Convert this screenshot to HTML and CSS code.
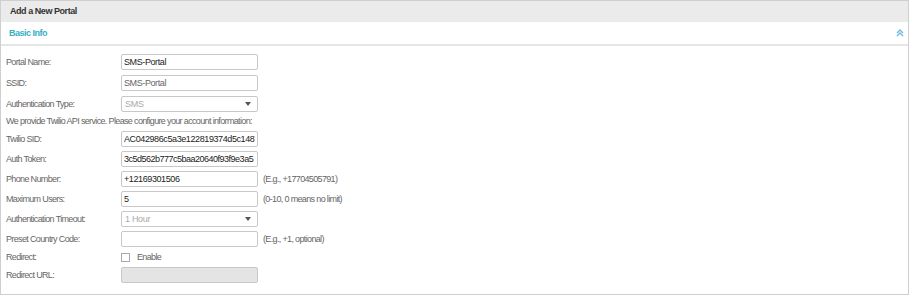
FILE: index.html
```html
<!DOCTYPE html>
<html lang="en">
<head>
    <meta charset="UTF-8">
    <title>Add a New Portal</title>
    <link rel="stylesheet" href="styles.css">
</head>
<body>
    <div class="panel">
        <div class="panel-title">Add a New Portal</div>

        <div class="section-head">
            <span>Basic Info</span>
            <svg class="collapse-icon" width="8" height="8" viewBox="0 0 8 8">
                <path d="M1 4 L4 1 L7 4 M1 7 L4 4 L7 7" fill="none" stroke="#6cb8e6" stroke-width="1.4"/>
            </svg>
        </div>

        <div class="form">
            <div class="row tall">
                <label>Portal Name:</label>
                <input type="text" value="SMS-Portal">
            </div>
            <div class="row tall">
                <label>SSID:</label>
                <input type="text" class="muted" value="SMS-Portal">
            </div>
            <div class="row tall">
                <label>Authentication Type:</label>
                <div class="select disabled">SMS<span class="caret"></span></div>
            </div>

            <div class="notice">We provide Twilio API service. Please configure your account information:</div>

            <div class="row">
                <label>Twilio SID:</label>
                <input type="text" value="AC042986c5a3e122819374d5c1487">
            </div>
            <div class="row">
                <label>Auth Token:</label>
                <input type="text" class="token" value="3c5d562b777c5baa20640f93f9e3a5">
            </div>
            <div class="row">
                <label>Phone Number:</label>
                <input type="text" value="+12169301506">
                <span class="hint">(E.g., +17704505791)</span>
            </div>
            <div class="row">
                <label>Maximum Users:</label>
                <input type="text" value="5">
                <span class="hint">(0-10, 0 means no limit)</span>
            </div>
            <div class="row">
                <label>Authentication Timeout:</label>
                <div class="select disabled">1 Hour<span class="caret"></span></div>
            </div>
            <div class="row">
                <label>Preset Country Code:</label>
                <input type="text" value="">
                <span class="hint">(E.g., +1, optional)</span>
            </div>
            <div class="row short">
                <label>Redirect:</label>
                <span class="check"></span>
                <span class="check-label">Enable</span>
            </div>
            <div class="row">
                <label>Redirect URL:</label>
                <input type="text" class="off" value="" disabled>
            </div>
        </div>
    </div>
</body>
</html>
```

FILE: styles.css
```css
body {
    margin: 0;
    font-family: "Liberation Sans", Arial, sans-serif;
    font-size: 9px;
    letter-spacing: -0.65px;
    color: #555;
    background-color: #fff;
}
.panel {
    width: 907px;
    height: 293px;
    border: 1px solid #cfcfcf;
    background-color: #fff;
}
.panel-title {
    height: 21px;
    line-height: 20px;
    padding-left: 9px;
    background-color: #ebebeb;
    font-weight: bold;
    letter-spacing: -0.45px;
    color: #333;
}
.section-head {
    display: flex;
    justify-content: space-between;
    align-items: center;
    height: 22px;
    padding: 0 4px 0 8px;
    border-bottom: 2px solid #e6e6e6;
    color: #35b0c4;
    font-weight: bold;
    letter-spacing: -0.5px;
}
.collapse-icon {
    display: block;
}
.form {
    padding: 5px 0 0 5px;
}
.row {
    display: flex;
    align-items: center;
    height: 20px;
}
.row.tall {
    height: 21px;
}
.row.short {
    height: 16px;
}
label {
    width: 115px;
    color: #666;
}
input {
    box-sizing: border-box;
    width: 137px;
    height: 16px;
    margin: 0;
    padding: 0 2px;
    border: 1px solid #c8c8c8;
    border-radius: 2px;
    font-family: "Liberation Sans", Arial, sans-serif;
    font-size: 9px;
    letter-spacing: -0.4px;
    color: #222;
    background-color: #fff;
    outline: none;
}
input.muted {
    color: #666;
}
input.token {
    letter-spacing: -0.5px;
}
input.off {
    background-color: #e4e4e4;
}
.select {
    box-sizing: border-box;
    display: flex;
    align-items: center;
    justify-content: space-between;
    width: 137px;
    height: 16px;
    padding: 0 6px 0 3px;
    border: 1px solid #c8c8c8;
    border-radius: 2px;
    letter-spacing: -0.3px;
    background-color: #fff;
}
.select.disabled {
    color: #aaa;
}
.caret {
    width: 0;
    height: 0;
    border-left: 3px solid transparent;
    border-right: 3px solid transparent;
    border-top: 4px solid #555;
}
.hint {
    margin-left: 5px;
    color: #666;
}
.notice {
    height: 15px;
    line-height: 14px;
    color: #666;
}
.check {
    box-sizing: border-box;
    width: 9px;
    height: 9px;
    border: 1px solid #aaa;
}
.check-label {
    margin-left: 7px;
    color: #666;
}
```
